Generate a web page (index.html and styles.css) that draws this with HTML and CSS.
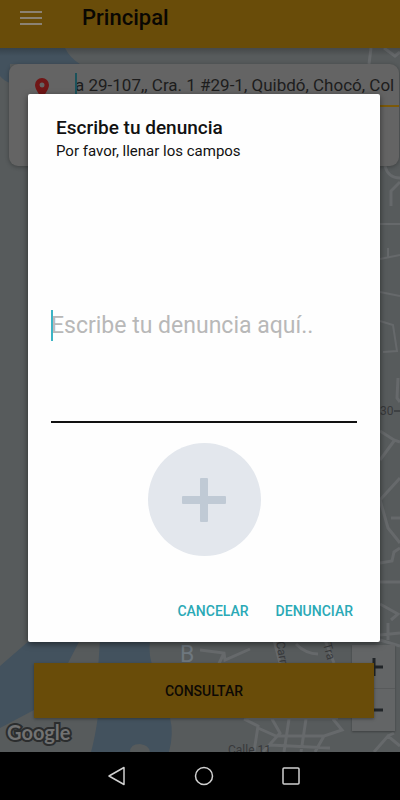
FILE: index.html
```html
<!DOCTYPE html>
<html lang="es">
<head>
<meta charset="utf-8">
<meta name="viewport" content="width=device-width, initial-scale=1">
<title>Principal</title>
<link rel="stylesheet" href="styles.css">
</head>
<body>
<div class="screen">
  <header class="app-bar">
    <button class="menu-button" type="button" aria-label="Abrir menú">
      <svg width="22" height="16" viewBox="0 0 22 16" aria-hidden="true"><path d="M0 2h22M0 8h22M0 14h22" stroke="#8b8274" stroke-width="2"/></svg>
    </button>
    <h1 class="app-title">Principal</h1>
  </header>

  <main class="map-view">
    <svg class="map" viewBox="0 0 400 704" preserveAspectRatio="xMidYMid slice" aria-hidden="true">
      <rect width="400" height="704" fill="#575b5c"/>
      <g fill="#43525e">
        <path d="M0 0H65Q70 10 80 16H10V35Q4 33 0 28Z"/>
        <path d="M0 618L30 592H80L68 615L34 635V662L0 680Z"/>
        <path d="M100 592H150Q148 608 154 622L170 670Q174 685 169 704H91Q95 690 98 668V622Z"/>
      </g>
      <path d="M130 704Q130 696 140 696Q149 697 150 704Z" fill="#575b5c"/>
      <g fill="none" stroke="#66696b" stroke-width="3">
        <path d="M371 0L369 16M384 0L395 8L400 4M385 118Q388 130 400 130M400 134L391 143V158"/>
        <path stroke-width="2" d="M380 176H400M380 211L400 207M388 200V209M380 244L400 248M380 273L393 277L397 303L383 304"/>
        <path d="M398 330L397 350L400 354M380 383L394 392L400 394M394 393L380 412M400 430L380 452L388 480L400 495M391 470H400M380 515L392 513L394 504L400 500M380 534H400M380 556L398 566L391 572M380 587L400 585M388 575V592"/>
        <path d="M200 602L224 605L225 612L250 601M216 622L224 605M274 592L280 615M296 596Q306 606 318 606M325 592L334 615M380 592L400 598"/>
        <path d="M244 671L258 678L254 704M272 671L280 685L263 704M289 671L284 704M306 671L301 704M333 671L342 682L324 688L315 704M258 680L276 688H324M246 670H338M270 697L330 700M374 704L388 688L400 698M388 688L394 685"/>
      </g>
      <g class="map-label">
        <text x="380" y="367" font-size="12">30</text>
        <path d="M394 363H400" stroke="#3e4143" stroke-width="2"/>
        <text x="228" y="706" font-size="12">Calle 11</text>
        <text transform="translate(276 594) rotate(80)" font-size="12">Carr</text>
        <text transform="translate(323 596) rotate(75)" font-size="12">Tra</text>
      </g>
      <text class="map-district" x="180" y="614" font-size="23">B</text>
    </svg>

    <section class="search-card">
      <label class="pin" for="address">
        <span class="sr-only">Dirección</span>
        <svg width="14" height="20" viewBox="0 0 14 20" aria-hidden="true"><path fill="#701616" fill-rule="evenodd" d="M7 0a7 7 0 0 0-7 7c0 5 7 13 7 13s7-8 7-13a7 7 0 0 0-7-7Zm0 4.500a2.500 2.500 0 1 1 0 5 2.500 2.500 0 0 1 0-5Z"/></svg>
      </label>
      <div class="address-field">
        <input id="address" class="address" type="text" value="a 29-107,, Cra. 1 #29-1, Quibdó, Chocó, Col">
      </div>
    </section>

    <div class="zoom-control">
      <button class="zoom-button" type="button" aria-label="Acercar"><svg width="18" height="18" viewBox="0 0 18 18" aria-hidden="true"><path d="M9 0v18M0 9h18" stroke="#202427" stroke-width="3"/></svg></button>
      <button class="zoom-button" type="button" aria-label="Alejar"><svg width="18" height="18" viewBox="0 0 18 18" aria-hidden="true"><path d="M0 9h18" stroke="#202427" stroke-width="3"/></svg></button>
    </div>
    <button class="consult-button" type="button">CONSULTAR</button>
    <span class="map-credit">Google</span>
  </main>

  <div class="overlay">
    <form class="dialog" role="dialog" aria-labelledby="dialog-title">
      <h2 class="dialog-title" id="dialog-title">Escribe tu denuncia</h2>
      <p class="dialog-text">Por favor, llenar los campos</p>
      <div class="report-field">
        <textarea class="report" aria-label="Denuncia" placeholder="Escribe tu denuncia aquí.."></textarea>
      </div>
      <button class="add-button" type="button" aria-label="Agregar foto">
        <svg width="44" height="44" viewBox="0 0 44 44" aria-hidden="true"><path fill="#c0cad5" d="M19 0h6q1 0 1 1v17h17q1 0 1 1v6q0 1-1 1H26v17q0 1-1 1h-6q-1 0-1-1V26H1q-1 0-1-1v-6q0-1 1-1h17V1q0-1 1-1Z"/></svg>
      </button>
      <div class="dialog-actions">
        <button class="text-button" type="button">CANCELAR</button>
        <button class="text-button" type="submit">DENUNCIAR</button>
      </div>
    </form>
  </div>

  <nav class="system-bar" aria-label="Sistema">
    <button class="system-button" type="button" aria-label="Atrás"><svg width="20" height="20" viewBox="0 0 20 20" aria-hidden="true"><path d="M17 1.500v17L2 10Z"/></svg></button>
    <button class="system-button" type="button" aria-label="Inicio"><svg width="20" height="20" viewBox="0 0 20 20" aria-hidden="true"><circle cx="10" cy="10" r="8.500"/></svg></button>
    <button class="system-button" type="button" aria-label="Recientes"><svg width="20" height="20" viewBox="0 0 20 20" aria-hidden="true"><rect x="2" y="2" width="16" height="16" rx="1"/></svg></button>
  </nav>
</div>
</body>
</html>
```
FILE: styles.css
```css
* {
  box-sizing: border-box;
}

body {
  margin: 0;
  font-family: Roboto, "Liberation Sans", sans-serif;
  color: #111;
  background: #000;
}

button,
input,
textarea {
  margin: 0;
  padding: 0;
  border: 0;
  background: none;
  font-family: inherit;
  outline: none;
}

svg {
  display: block;
}

.sr-only {
  position: absolute;
  width: 1px;
  height: 1px;
  overflow: hidden;
  clip-path: inset(50%);
}

.screen {
  position: relative;
  display: flex;
  flex-direction: column;
  min-height: 100vh;
  overflow: hidden;
}

.app-bar {
  display: flex;
  align-items: center;
  gap: 40px;
  height: 48px;
  padding: 0 20px 12px;
  background: #694c09;
}

.app-title {
  margin: 0;
  font-size: 22px;
  line-height: 28px;
  font-weight: 500;
  color: #090703;
}

.map-view {
  position: relative;
  flex: 1;
  display: flex;
  flex-direction: column;
  justify-content: space-between;
  padding: 16px 0 34px;
  overflow: hidden;
}

.map {
  position: absolute;
  inset: 0;
  width: 100%;
  height: 100%;
}

.map-view::before {
  content: "";
  position: absolute;
  inset: 0 0 auto;
  z-index: 1;
  height: 8px;
  background: linear-gradient(rgba(0, 0, 0, 0.2), transparent);
}

.map-label {
  fill: #37393b;
}

.map-district {
  fill: #6e777e;
}

.search-card {
  position: relative;
  display: flex;
  align-items: flex-start;
  height: 102px;
  margin: 0 1px 0 9px;
  border-radius: 9px;
  background: #646464;
  box-shadow: 0 1px 4px rgba(0, 0, 0, 0.3);
}

.pin {
  padding: 14px 26px 0;
}

.address-field {
  position: relative;
  flex: 1;
  min-width: 0;
  border-bottom: 2px solid #7c5909;
}

.address {
  display: block;
  width: 100%;
  height: 41px;
  font-size: 17px;
  color: #1d1d1d;
}

.address-field::before {
  content: "";
  position: absolute;
  top: 9px;
  left: 0;
  width: 2px;
  height: 22px;
  background: #1b525b;
}

.zoom-control {
  position: absolute;
  right: 5px;
  bottom: 21px;
  display: flex;
  flex-direction: column;
  width: 43px;
  background: #636566;
  box-shadow: 0 1px 2px rgba(0, 0, 0, 0.3);
}

.zoom-button {
  display: grid;
  place-items: center;
  height: 43px;
}

.zoom-button + .zoom-button {
  border-top: 1px solid #585a5b;
}

.consult-button {
  position: relative;
  height: 55px;
  margin: 0 26px 0 34px;
  font-size: 14px;
  font-weight: 500;
  color: #0d0905;
  background: #694c09;
  box-shadow: 0 1px 3px rgba(0, 0, 0, 0.35);
}

.map-credit {
  position: absolute;
  left: 7px;
  bottom: 7px;
  font-family: Lato, sans-serif;
  font-size: 20px;
  line-height: 26px;
  font-weight: 700;
  color: #727272;
  -webkit-text-stroke: 4px #2b2d2e;
  paint-order: stroke fill;
}

.overlay {
  position: absolute;
  inset: 0;
  z-index: 2;
  display: flex;
  align-items: center;
  padding: 0 20px 64px 28px;
}

.dialog {
  display: flex;
  flex-direction: column;
  width: 100%;
  padding: 22px 23px 13px;
  border-radius: 2px;
  background: #fefefe;
  box-shadow: 0 2px 6px rgba(0, 0, 0, 0.5);
}

.dialog-title {
  margin: 0 5px;
  font-size: 19px;
  line-height: 24px;
  font-weight: 500;
}

.dialog-text {
  margin: 0 5px;
  font-size: 15px;
  line-height: 22px;
}

.report-field {
  position: relative;
  margin-top: 148px;
  border-bottom: 2px solid #111;
}

.report {
  display: block;
  width: 100%;
  height: 111px;
  font-size: 23px;
  line-height: 32px;
  resize: none;
}

.report::placeholder {
  color: #b8b8b8;
}

.report-field::before {
  content: "";
  position: absolute;
  left: 0;
  width: 2px;
  height: 31px;
  background: #3cb4c5;
}

.add-button {
  display: grid;
  place-items: center;
  align-self: center;
  width: 113px;
  height: 113px;
  margin-top: 20px;
  border-radius: 50%;
  background: #e3e7ed;
}

.dialog-actions {
  display: flex;
  justify-content: flex-end;
  gap: 27px;
  margin-top: 37px;
  padding-right: 4px;
}

.text-button {
  height: 36px;
  font-size: 14px;
  font-weight: 500;
  color: #2ba9b6;
}

.system-bar {
  display: flex;
  justify-content: center;
  gap: 67px;
  height: 48px;
  padding-left: 7px;
  background: #000;
}

.system-button svg {
  fill: none;
  stroke: #d0d0d0;
  stroke-width: 1.500px;
  stroke-linejoin: round;
}
```
